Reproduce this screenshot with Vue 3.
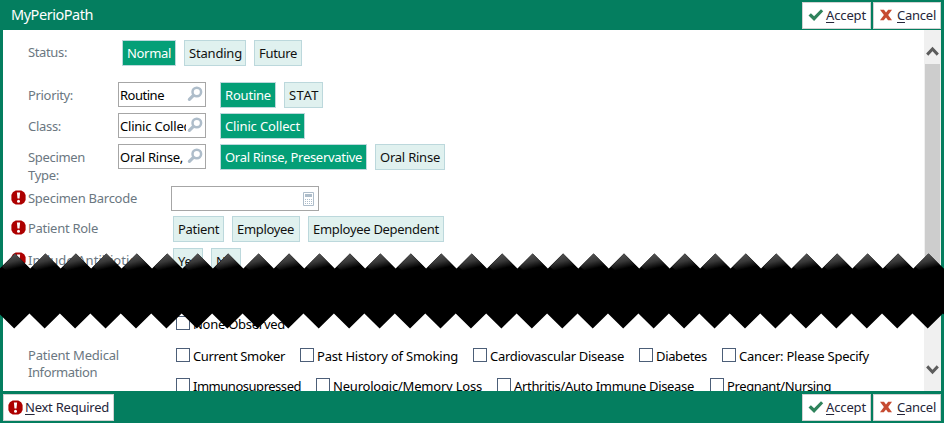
<script setup>
const canvas = document.createElement('canvas').getContext('2d')

// Tracks a label so that it occupies its column width.
function fit(text, width, size = 13) {
  canvas.font = `${size}px "Noto Sans"`
  const gap = (width - 1 - canvas.measureText(text).width) / text.length
  return { letterSpacing: `${gap.toFixed(3)}px` }
}

const rows = [
  { kind: 'status', label: [['Status:', 40]], chips: [['Normal', 54, 45, true], ['Standing', 62, 54], ['Future', 48, 39]] },
  { kind: 'priority', label: [['Priority:', 46]], lookup: ['Routine', 45], chips: [['Routine', 56, 47, true], ['STAT', 39, 31]] },
  { kind: 'class', label: [['Class:', 34]], lookup: ['Clinic Collect', 75], chips: [['Clinic Collect', 85, 76, true]] },
  { kind: 'specimen', label: [['Specimen', 58], ['Type:', 32]], lookup: ['Oral Rinse,', 64], chips: [['Oral Rinse, Preservative', 147, 138, true], ['Oral Rinse', 70, 61]] },
  { kind: 'barcode', required: true, label: [['Specimen Barcode', 110]], number: true },
  { kind: 'role', required: true, label: [['Patient Role', 71]], chips: [['Patient', 51, 42], ['Employee', 68, 58], ['Employee Dependent', 136, 127]] },
  { kind: 'antibiotics', required: true, label: [['Include Antibiotics', 115]], chips: [['Yes', 30, 21], ['No', 30, 18]] },
  { kind: 'observed', checks: [['None Observed', 93, 124]] },
  { kind: 'medical', label: [['Patient Medical', 92], ['Information', 70]], checks: [['Current Smoker', 93, 124], ['Past History of Smoking', 142, 173], ['Cardiovascular Disease', 135, 166], ['Diabetes', 52, 83], ['Cancer: Please Specify', 131, 150]] },
  { kind: 'medical-more', checks: [['Immunosupressed', 109, 140], ['Neurologic/Memory Loss', 150, 181], ['Arthritis/Auto Immune Disease', 181, 213], ['Pregnant/Nursing', 105, 130]] },
]

const pitch = 30.45
const teeth = Array.from({ length: 33 }, (_, i) => 15 + (i - 1) * pitch)
const upper = teeth.map((x) => `${x - pitch / 2},268.5 ${x},253.5`).join(' ')
const lower = [...teeth].reverse().map((x) => `${x - 0.8},328.5 ${x - 0.8 - pitch / 2},313.5`).join(' ')
</script>

<template>
  <main class="window">
    <svg class="defs" width="0" height="0">
      <symbol id="tick" viewBox="0 0 16 14"><path d="M.5 7.6 2.9 5.2l3.2 3L13 1.2l2.2 2.1-9.1 9.6z" fill="#2f835c" /></symbol>
      <symbol id="cross" viewBox="0 0 12 12"><path d="M0 .8h4L6 3.5 8.2.8H12L8.2 6l3.8 5.3H8L6 8.5l-2.2 2.8H0L3.9 6z" fill="#c64b32" /></symbol>
      <symbol id="alert" viewBox="0 0 15 15"><path d="M4.7.4h5.6l2.9 1.8 1.4 2.9v4.8l-1.4 2.9-2.9 1.8H4.7l-2.9-1.8L.4 9.9V5.1l1.4-2.9z" fill="#ad0000" /><path d="M5.9 2.4h3.2l-.6 6.2h-2z" fill="#fff" /><circle cx="7.5" cy="11.2" r="1.5" fill="#fff" /></symbol>
      <symbol id="lens" viewBox="0 0 16 16"><circle cx="9.8" cy="6" r="4.3" fill="none" stroke="#aebdca" stroke-width="2.5" /><path d="M6.2 9.6 2.4 13.4" stroke="#aebdca" stroke-width="3.2" stroke-linecap="round" /></symbol>
      <symbol id="calc" viewBox="0 0 11 14"><path d="M.5.5h10v13H.5z" fill="#fff" stroke="#aebdca" /><path d="M2 2h7v3H2z" fill="#aebdca" /><path d="M2 7.5h7M2 9.5h7M2 11.5h7" stroke="#aebdca" stroke-dasharray="1 1" /></symbol>
    </svg>

    <header class="bar top">
      <h1 :style="fit('MyPerioPath', 83, 14.5)">MyPerioPath</h1>
      <div class="actions">
        <button class="accept"><svg width="16" height="14"><use href="#tick" /></svg><span :style="fit('Accept', 41)"><u>A</u>ccept</span></button>
        <button class="cancel"><svg width="12" height="12"><use href="#cross" /></svg><span :style="fit('Cancel', 40)"><u>C</u>ancel</span></button>
      </div>
    </header>

    <section class="body">
      <div class="form">
        <div v-for="row in rows" :key="row.kind" class="row" :class="row.kind">
          <div class="flag"><svg v-if="row.required" width="15" height="15"><use href="#alert" /></svg></div>
          <div class="label"><div v-for="line in row.label" :key="line[0]"><span :style="fit(...line)">{{ line[0] }}</span></div></div>
          <div v-if="row.lookup" class="lookup">
            <div class="value"><span :style="fit(...row.lookup)">{{ row.lookup[0] }}</span></div>
            <svg width="16" height="16"><use href="#lens" /></svg>
          </div>
          <div v-if="row.number" class="number"><svg width="11" height="14"><use href="#calc" /></svg></div>
          <div v-if="row.chips" class="chips">
            <div v-for="c in row.chips" :key="c[0]" class="chip" :class="{ on: c[3] }" :style="{ width: c[1] + 'px' }"><span :style="fit(c[0], c[2])">{{ c[0] }}</span></div>
          </div>
          <div v-if="row.checks" class="checks">
            <label v-for="c in row.checks" :key="c[0]" class="check" :style="{ width: c[2] + 'px' }"><i class="box"></i><span :style="fit(c[0], c[1])">{{ c[0] }}</span></label>
          </div>
        </div>
      </div>
      <aside class="scroll">
        <svg width="17" height="34" viewBox="0 0 17 34"><path d="M3.2 24.6 8.5 19l5.3 5.6" fill="none" stroke="#5c5c5c" stroke-width="3" /></svg>
        <div class="thumb"></div>
        <svg width="17" height="34" viewBox="0 0 17 34"><path d="M3.2 9.4 8.5 15l5.3-5.6" fill="none" stroke="#5c5c5c" stroke-width="3" /></svg>
      </aside>
    </section>

    <footer class="bar bottom">
      <button class="next"><svg width="15" height="15"><use href="#alert" /></svg><span :style="fit('Next Required', 85)"><u>N</u>ext Required</span></button>
      <div class="actions">
        <button class="accept"><svg width="16" height="14"><use href="#tick" /></svg><span :style="fit('Accept', 41)"><u>A</u>ccept</span></button>
        <button class="cancel"><svg width="12" height="12"><use href="#cross" /></svg><span :style="fit('Cancel', 40)"><u>C</u>ancel</span></button>
      </div>
    </footer>

    <svg class="tear" width="944" height="423" viewBox="0 0 944 423">
      <defs>
        <linearGradient id="shade" x1="0.35" y1="0.1" x2="0.65" y2="0.95">
          <stop offset="0" stop-color="#505050" /><stop offset="0.4" stop-color="#383838" /><stop offset="0.85" stop-color="#000" />
        </linearGradient>
      </defs>
      <polygon :points="`${upper} ${lower}`" fill="#000" />
      <polygon v-for="x in teeth" :key="x" :points="`${x - 13},267 ${x},253.5 ${x + 13},267 ${x},271 ${x - 8},271`" fill="url(#shade)" />
    </svg>
  </main>
</template>

<style>
body { margin: 0; overflow: hidden; }
</style>

<style scoped>
* { box-sizing: border-box; }
.window { position: relative; display: flex; flex-direction: column; width: 944px; height: 423px; overflow: hidden; background: #047e5f; font: 13px/18px "Noto Sans", "Open Sans", sans-serif; color: #111; white-space: nowrap; }
.defs { position: absolute; }
.bar { display: flex; justify-content: space-between; flex: none; padding: 0 3px; }
.top { height: 30px; padding-top: 2px; }
.bottom { height: 32px; padding-top: 3px; }
h1 { margin: 0; padding: 2px 0 0 8px; font-size: 14.5px; line-height: 20px; font-weight: 400; color: #fff; }
.actions { display: flex; gap: 2px; }
button { display: flex; align-items: center; height: 27px; margin: 0; padding: 0 0 1px 5px; border: 1px solid #d2d2d2; background: #fff; font: inherit; color: #26263a; }
.accept { width: 69px; gap: 2px; }
.cancel { width: 68px; padding-left: 6px; gap: 5px; }
.next { width: 111px; padding-left: 4px; gap: 2px; }
u { text-decoration-thickness: 1px; text-underline-offset: 2px; }
.body { display: flex; height: 361px; margin: 0 3px; overflow: hidden; background: #fff; }
.form { display: flex; flex-direction: column; width: 921px; padding-top: 10px; }
.row { display: flex; flex: none; height: 31px; }
.status, .specimen { height: 42px; }
.barcode, .medical { height: 30px; }
.role, .observed { height: 32px; }
.antibiotics { height: 68px; }
.flag { flex: none; width: 25px; padding: 4px 0 0 8px; }
.flag svg { display: block; }
.label { flex: none; width: 90px; padding-top: 4px; color: #6b7781; }
.status .label { width: 94px; padding-top: 3px; }
.barcode .label { width: 143px; padding-top: 3px; }
.role .label, .antibiotics .label { width: 145px; padding-top: 3px; }
.observed .label, .medical .label, .medical-more .label { width: 148px; padding-top: 0; }
.medical .label { line-height: 17px; margin-top: -1px; }
.lookup { display: flex; justify-content: space-between; width: 88px; height: 25px; margin-right: 14px; padding: 3px 2px 0 1px; border: 1px solid #a6a6a6; background: #fff; color: #000; }
.lookup .value { width: 66px; overflow: hidden; }
.lookup svg { flex: none; }
.number { display: flex; align-items: center; justify-content: flex-end; width: 148px; height: 25px; padding-right: 4px; border: 1px solid #a6a6a6; }
.chips { display: flex; gap: 8px; }
.chip { height: 26px; padding: 3px 0 0 4px; border: 1px solid #bcd8dc; background: #e0f1ef; }
.chip.on { background: #049f77; color: #fff; }
.checks { display: flex; }
.check { display: flex; gap: 3px; flex: none; line-height: 16px; color: #000; }
.box { flex: none; width: 14px; height: 14px; border: 1px solid #4c5e78; background: #fff; }
.scroll { display: flex; flex-direction: column; width: 17px; background: #f0f0f0; }
.scroll svg { flex: none; }
.thumb { flex: 1; margin: 0 1px; background: #cdcdcd; max-height: 210px; margin-bottom: auto; }
.tear { position: absolute; inset: 0; pointer-events: none; }
</style>
